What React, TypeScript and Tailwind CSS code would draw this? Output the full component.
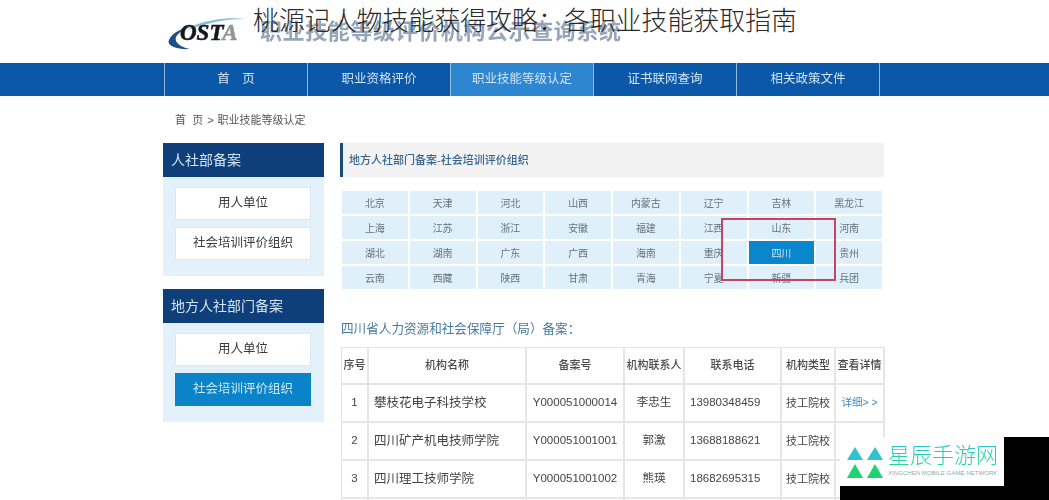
const F = "[font-family:'Liberation_Sans','Noto_Sans_CJK_SC',sans-serif]";

const nav = ["首　页", "职业资格评价", "职业技能等级认定", "证书联网查询", "相关政策文件"];
const provinces = [
  "北京","天津","河北","山西","内蒙古","辽宁","吉林","黑龙江",
  "上海","江苏","浙江","安徽","福建","江西","山东","河南",
  "湖北","湖南","广东","广西","海南","重庆","四川","贵州",
  "云南","西藏","陕西","甘肃","青海","宁夏","新疆","兵团",
];
const rows = [
  ["1","攀枝花电子科技学校","Y000051000014","李忠生","13980348459","技工院校","详细> >"],
  ["2","四川矿产机电技师学院","Y000051001001","郭激","13688188621","技工院校",""],
  ["3","四川理工技师学院","Y000051001002","熊瑛","18682695315","技工院校",""],
  ["","","","","","",""],
];
const heads = ["序号","机构名称","备案号","机构联系人","联系电话","机构类型","查看详情"];
const tableCols = "grid grid-cols-[27px_158px_98px_60px_97px_54px_49px]";

function Logo() {
  return (
    <svg width="78" height="36" viewBox="0 0 78 36" className="shrink-0">
      <path d="M22 33C10 34 -2 30 1 24C4 16 16 12 24 10C12 15 6 20 8 25C10 29 16 32 22 33Z" fill="#1b4f86" />
      <path d="M24 10C42 3 62 1 77 3C60 3 42 6 20 14Z" fill="#8fbcd6" />
      <text x="12" y="24" fontFamily="'Liberation Serif',serif" fontWeight="700" fontStyle="italic" fontSize="23" fill="#14181f" stroke="#14181f" strokeWidth="0.6">
        OST<tspan fill="#8f979c" stroke="#8f979c">A</tspan>
      </text>
    </svg>
  );
}

function Side({ title, active }: { title: string; active?: boolean }) {
  return (
    <div className="w-[161px]">
      <div className="h-[34px] bg-[#0e3f7b] pl-[8px] flex items-center text-[14px] text-[#d3e4f2]">{title}</div>
      <div className="bg-[#e3f1fb] pl-[12px] pr-[13px] pt-[10px] pb-[16px] flex flex-col gap-[7px]">
        <div className="h-[33px] bg-white border border-[#dfe8ee] flex items-center justify-center text-[12.5px] text-[#3a3a3a]">用人单位</div>
        {active ? (
          <div className="h-[33px] bg-[#0a83c8] flex items-center justify-center text-[12.5px] text-[#cfe9f7]">社会培训评价组织</div>
        ) : (
          <div className="h-[33px] bg-white border border-[#dfe8ee] flex items-center justify-center text-[12.5px] text-[#3a3a3a]">社会培训评价组织</div>
        )}
      </div>
    </div>
  );
}

function cellClass(j: number) {
  if (j === 1) return "justify-start pl-[5px] text-[12.5px] text-[#444]";
  if (j === 4) return "justify-start pl-[5px] text-[11.5px] text-[#444]";
  if (j === 5) return "justify-center text-[11px] text-[#444]";
  if (j === 6) return "justify-center text-[10.5px] text-[#3b8cc4]";
  return "justify-center text-[11.5px] text-[#444]";
}

export default function App() {
  return (
    <div className={`relative w-[1049px] h-[500px] overflow-hidden bg-white ${F}`}>
      <div className="blur-[0.5px]">
        <div className="h-[63px] pl-[168px] pt-[16px] flex items-start gap-[14px]">
          <Logo />
          <div className="text-[22px] leading-[32px] font-bold text-[#97a5b8] whitespace-nowrap tracking-[0.6px]">职业技能等级评价机构公示查询系统</div>
        </div>
        <div className="h-[33px] bg-[#0b57a8] pl-[164px] flex">
          <div className="flex border-l border-[#8fbbdf]">
            {nav.map((n, i) => (
              <div key={n} className={`w-[143px] h-[33px] border-r border-[#8fbbdf] flex items-center justify-center text-[12.5px] text-[#cde4f5] ${i === 2 ? "bg-[#2f86d0]" : ""}`}>{n}</div>
            ))}
          </div>
        </div>
        <div className="pl-[175px] h-[47px] flex items-center gap-[4px] text-[11px] text-[#555] pt-[2px]">
          <span>首{"\u00a0\u00a0"}页</span>
          <span>&gt;</span>
          <span>职业技能等级认定</span>
        </div>

        <div className="pl-[163px] flex gap-[16px]">
          <div className="flex flex-col gap-[13px]">
            <Side title="人社部备案" />
            <Side title="地方人社部门备案" active />
          </div>
          <div className="w-[544px]">
            <div className="h-[34px] bg-[#f2f2f2] border-l-[3px] border-[#1b4a78] pl-[6px] flex items-center text-[11px] font-medium text-[#35658f]">地方人社部门备案-社会培训评价组织</div>
            <div className="mt-[14px] ml-[2px] w-[540px] grid grid-cols-8 gap-[2px]">
              {provinces.map((p) => (
                <div key={p} className={`h-[23px] pt-[1px] flex items-center justify-center text-[10px] ${p === "四川" ? "bg-[#0a86cc] text-[#cfe9f7]" : "bg-[#e0f0fb] text-[#66727c]"}`}>{p}</div>
              ))}
            </div>
            <div className="mt-[30px] ml-[1px] h-[20px] flex items-center text-[12.6px] text-[#477a9f] whitespace-nowrap">四川省人力资源和社会保障厅（局）备案：</div>
            <div className="mt-[8px] ml-[1px] border-t border-l border-[#e4e4e4] w-[544px]">
              <div className={`${tableCols} h-[37px]`}>
                {heads.map((h) => (
                  <div key={h} className="border-r-2 border-b-2 border-[#e6e6e6] flex items-center justify-center text-[11px] font-medium text-[#4a4a4a] whitespace-nowrap">{h}</div>
                ))}
              </div>
              {rows.map((r, i) => (
                <div key={i} className={`${tableCols} h-[38px]`}>
                  {r.map((c, j) => (
                    <div key={j} className={`border-r-2 border-b-2 border-[#e6e6e6] flex items-center whitespace-nowrap ${cellClass(j)}`}>{c}</div>
                  ))}
                </div>
              ))}
            </div>
          </div>
        </div>
      </div>

      <div className="absolute left-[721px] top-[218px] w-[115px] h-[63px] border-2 border-[#c4455f]" />

      <div className="absolute left-[253px] top-[3px] text-[26px] leading-[36px] tracking-[-0.1px] font-light text-[#2a2a2a] whitespace-nowrap">桃源记人物技能获得攻略：各职业技能获取指南</div>

      <div className="absolute left-[840px] top-[437px] w-[209px] h-[63px] bg-black">
        <div className="w-[164px] h-[49px] bg-white pl-[7px] pt-[9px] flex gap-[4px]">
          <svg width="37" height="33" viewBox="0 0 37 33" className="shrink-0">
            <polygon points="0,14 8,1 16,14" fill="#2bc4cf" />
            <polygon points="20,14 28,1 36,14" fill="#2bc4cf" />
            <polygon points="0,32 8,18 16,32" fill="#1fd272" />
            <polygon points="20,32 28,18 36,32" fill="#1fd272" />
          </svg>
          <div className="flex flex-col -mt-[3px]">
            <div className="text-[22px] leading-[26px] font-light whitespace-nowrap text-transparent bg-clip-text bg-gradient-to-b from-[#2cc6cf] to-[#25d68a]">星辰手游网</div>
            <div className="text-[6.1px] leading-[8px] text-[#8fb0a8] whitespace-nowrap">XINGCHEN MOBILE GAME NETWORK</div>
          </div>
        </div>
      </div>
    </div>
  );
}
